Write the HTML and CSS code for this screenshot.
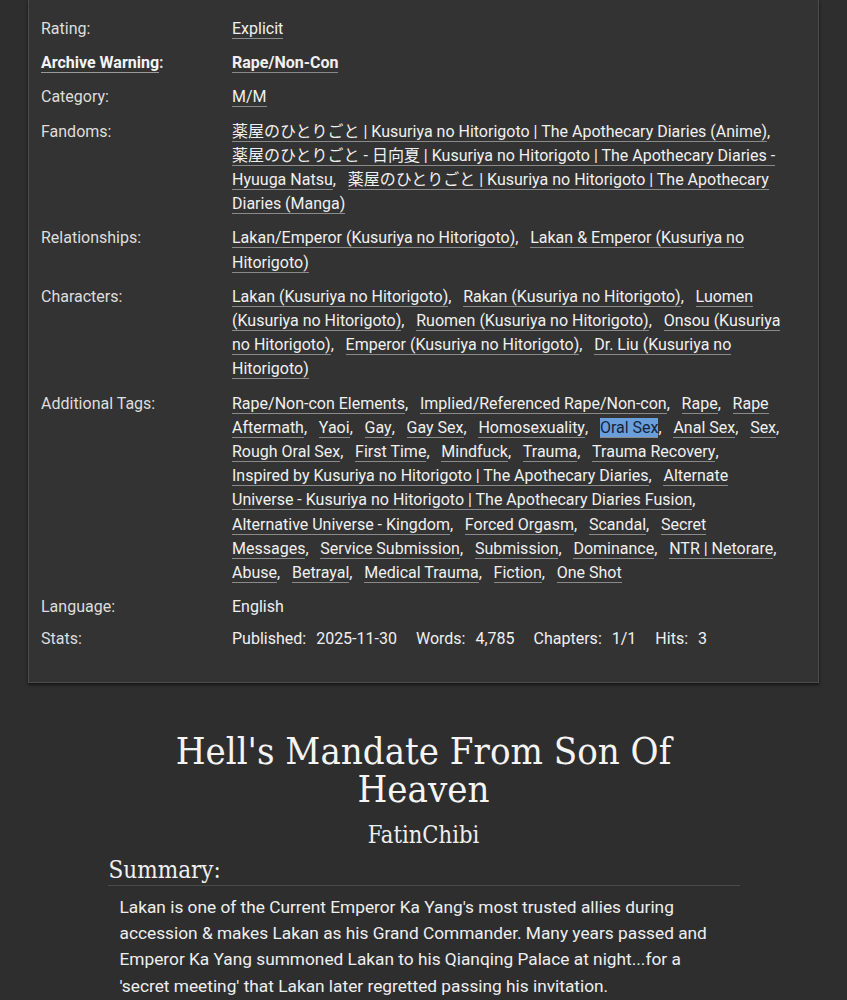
FILE: index.html
```html
<!DOCTYPE html>
<html lang="en">
<head>
<meta charset="utf-8">
<title>Hell's Mandate From Son Of Heaven</title>
<link rel="stylesheet" href="styles.css">
</head>
<body>
<div class="meta">
  <dl class="grid">
    <dt>Rating:</dt>
    <dd><ul class="tags"><li><a>Explicit</a></li></ul></dd>

    <dt class="strong"><a>Archive Warning</a>:</dt>
    <dd class="strong"><ul class="tags"><li><a>Rape/Non-Con</a></li></ul></dd>

    <dt>Category:</dt>
    <dd><ul class="tags"><li><a>M/M</a></li></ul></dd>

    <dt>Fandoms:</dt>
    <dd><ul class="tags">
      <li><a>薬屋のひとりごと | Kusuriya no Hitorigoto | The Apothecary Diaries (Anime)</a></li>
      <li><a>薬屋のひとりごと - 日向夏 | Kusuriya no Hitorigoto | The Apothecary Diaries - Hyuuga Natsu</a></li>
      <li><a>薬屋のひとりごと | Kusuriya no Hitorigoto | The Apothecary Diaries (Manga)</a></li>
    </ul></dd>

    <dt>Relationships:</dt>
    <dd><ul class="tags">
      <li><a>Lakan/Emperor (Kusuriya no Hitorigoto)</a></li>
      <li><a>Lakan &amp; Emperor (Kusuriya no Hitorigoto)</a></li>
    </ul></dd>

    <dt>Characters:</dt>
    <dd><ul class="tags">
      <li><a>Lakan (Kusuriya no Hitorigoto)</a></li>
      <li><a>Rakan (Kusuriya no Hitorigoto)</a></li>
      <li><a>Luomen (Kusuriya no Hitorigoto)</a></li>
      <li><a>Ruomen (Kusuriya no Hitorigoto)</a></li>
      <li><a>Onsou (Kusuriya no Hitorigoto)</a></li>
      <li><a>Emperor (Kusuriya no Hitorigoto)</a></li>
      <li><a>Dr. Liu (Kusuriya no Hitorigoto)</a></li>
    </ul></dd>

    <dt>Additional Tags:</dt>
    <dd><ul class="tags">
      <li><a>Rape/Non-con Elements</a></li>
      <li><a>Implied/Referenced Rape/Non-con</a></li>
      <li><a>Rape</a></li>
      <li><a>Rape Aftermath</a></li>
      <li><a>Yaoi</a></li>
      <li><a>Gay</a></li>
      <li><a>Gay Sex</a></li>
      <li><a>Homosexuality</a></li>
      <li><a><span class="selected">Oral Sex</span></a></li>
      <li><a>Anal Sex</a></li>
      <li><a>Sex</a></li>
      <li><a>Rough Oral Sex</a></li>
      <li><a>First Time</a></li>
      <li><a>Mindfuck</a></li>
      <li><a>Trauma</a></li>
      <li><a>Trauma Recovery</a></li>
      <li><a>Inspired by Kusuriya no Hitorigoto | The Apothecary Diaries</a></li>
      <li><a>Alternate Universe - Kusuriya no Hitorigoto | The Apothecary Diaries Fusion</a></li>
      <li><a>Alternative Universe - Kingdom</a></li>
      <li><a>Forced Orgasm</a></li>
      <li><a>Scandal</a></li>
      <li><a>Secret Messages</a></li>
      <li><a>Service Submission</a></li>
      <li><a>Submission</a></li>
      <li><a>Dominance</a></li>
      <li><a>NTR | Netorare</a></li>
      <li><a>Abuse</a></li>
      <li><a>Betrayal</a></li>
      <li><a>Medical Trauma</a></li>
      <li><a>Fiction</a></li>
      <li><a>One Shot</a></li>
    </ul></dd>

    <dt>Language:</dt>
    <dd>English</dd>

    <dt class="stats-label">Stats:</dt>
    <dd class="stats-value">
      <dl class="stats">
        <div class="stat"><dt>Published:</dt><dd>2025-11-30</dd></div>
        <div class="stat"><dt>Words:</dt><dd>4,785</dd></div>
        <div class="stat"><dt>Chapters:</dt><dd>1/1</dd></div>
        <div class="stat"><dt>Hits:</dt><dd>3</dd></div>
      </dl>
    </dd>
  </dl>
</div>

<div class="preface">
  <h2 class="title">Hell's Mandate From Son Of Heaven</h2>
  <h3 class="byline">FatinChibi</h3>
  <div class="summary">
    <h3 class="heading">Summary:</h3>
    <blockquote class="userstuff">
      <p>Lakan is one of the Current Emperor Ka Yang's most trusted allies during accession &amp; makes Lakan as his Grand Commander. Many years passed and Emperor Ka Yang summoned Lakan to his Qianqing Palace at night...for a 'secret meeting' that Lakan later regretted passing his invitation.</p>
    </blockquote>
  </div>
</div>
</body>
</html>
```

FILE: styles.css
```css
html, body {
  margin: 0;
  padding: 0;
  background: #2e2e2e;
}

body {
  font-family: Roboto, "Noto Sans CJK JP", sans-serif;
  font-size: 16px;
  line-height: 24.2px;
  color: #ececec;
}

.meta {
  margin: -1px 28px 0;
  background: #333333;
  border: 1px solid #4b4b4b;
  box-shadow: 0 2px 3px rgba(0, 0, 0, 0.55);
  padding: 17px 36px 30px 12px;
}

.grid {
  display: grid;
  grid-template-columns: 191px 1fr;
  row-gap: 10px;
  margin: 0;
}

.grid > dt {
  color: #dedede;
  margin: 0;
}

.grid > dd {
  margin: 0;
  color: #f0f0f0;
}

.grid > .stats-label,
.grid > .stats-value {
  margin-top: -2px;
}

.strong {
  font-weight: 700;
}

.grid > dt.strong a {
  color: #f4f4f4;
  border-bottom: 1px solid #9a9a9a;
}

.tags {
  list-style: none;
  margin: 0;
  padding: 0;
  display: inline;
  word-spacing: 7.8px;
}

.tags li {
  display: inline;
}

.tags li::after {
  content: ",";
}

.tags li:last-child::after {
  content: "";
}

.tags a {
  color: #f0f0f0;
  text-decoration: none;
  border-bottom: 1px solid #8a8a8a;
  word-spacing: normal;
}

.selected {
  background: #6a9fdb;
  color: #14243c;
}

.stats {
  display: flex;
  gap: 19px;
  margin: 0;
}

.stat {
  display: flex;
  gap: 10px;
}

.stat dt, .stat dd {
  margin: 0;
}

.preface {
  width: 632px;
  margin: 0 auto;
  padding-top: 49px;
  font-family: "DejaVu Serif Condensed", "DejaVu Serif", serif;
}

.title {
  margin: 0;
  text-align: center;
  font-weight: 400;
  font-size: 38px;
  line-height: 38px;
  color: #f4f4f4;
}

.byline {
  margin: 12px 0 0;
  text-align: center;
  font-weight: 400;
  font-size: 23.5px;
  line-height: 30px;
  color: #eeeeee;
}

.summary {
  margin-top: 5px;
}

.heading {
  margin: 0;
  padding-left: 1px;
  font-weight: 400;
  font-size: 24px;
  line-height: 30px;
  color: #f0f0f0;
  border-bottom: 1px solid #4a4a4a;
}

.userstuff {
  margin: 8px 0 0;
  padding: 0 12px;
  font-family: Roboto, sans-serif;
  font-size: 17.3px;
  line-height: 26.3px;
  color: #eeeeee;
}

.userstuff p {
  margin: 0;
}
```
